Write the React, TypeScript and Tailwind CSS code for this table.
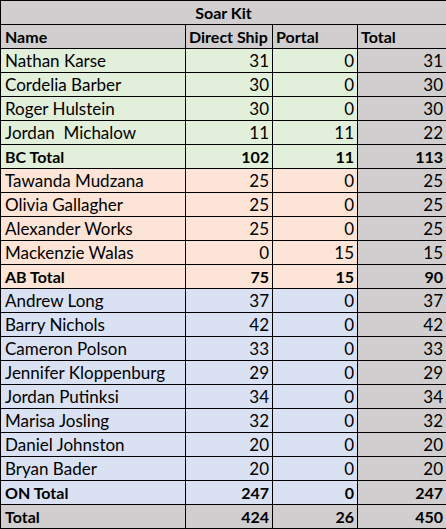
import React from 'react';

type Row = { name: string; direct: number; portal: number; total: number; bold?: boolean };

const groups: { bg: string; rows: Row[] }[] = [
  {
    bg: 'bg-[#e2efda]',
    rows: [
      { name: 'Nathan Karse', direct: 31, portal: 0, total: 31 },
      { name: 'Cordelia Barber', direct: 30, portal: 0, total: 30 },
      { name: 'Roger Hulstein', direct: 30, portal: 0, total: 30 },
      { name: 'Jordan\u00a0 Michalow', direct: 11, portal: 11, total: 22 },
      { name: 'BC Total', direct: 102, portal: 11, total: 113, bold: true },
    ],
  },
  {
    bg: 'bg-[#fce4d6]',
    rows: [
      { name: 'Tawanda Mudzana', direct: 25, portal: 0, total: 25 },
      { name: 'Olivia Gallagher', direct: 25, portal: 0, total: 25 },
      { name: 'Alexander Works', direct: 25, portal: 0, total: 25 },
      { name: 'Mackenzie Walas', direct: 0, portal: 15, total: 15 },
      { name: 'AB Total', direct: 75, portal: 15, total: 90, bold: true },
    ],
  },
  {
    bg: 'bg-[#d9e1f2]',
    rows: [
      { name: 'Andrew Long', direct: 37, portal: 0, total: 37 },
      { name: 'Barry Nichols', direct: 42, portal: 0, total: 42 },
      { name: 'Cameron Polson', direct: 33, portal: 0, total: 33 },
      { name: 'Jennifer Kloppenburg', direct: 29, portal: 0, total: 29 },
      { name: 'Jordan Putinksi', direct: 34, portal: 0, total: 34 },
      { name: 'Marisa Josling', direct: 32, portal: 0, total: 32 },
      { name: 'Daniel Johnston', direct: 20, portal: 0, total: 20 },
      { name: 'Bryan Bader', direct: 20, portal: 0, total: 20 },
      { name: 'ON Total', direct: 247, portal: 0, total: 247, bold: true },
    ],
  },
];

const cell = 'border border-black h-6 p-0 leading-none align-bottom pb-[3px]';

export default function App() {
  return (
    <div className="bg-white" style={{ fontFamily: 'Lato, "Open Sans", sans-serif' }}>
      <table className="border-collapse table-fixed w-[446px] text-[17px] text-black">
        <colgroup>
          <col className="w-[185px]" />
          <col className="w-[87px]" />
          <col className="w-[85px]" />
          <col className="w-[89px]" />
        </colgroup>
        <tbody>
          <tr className="bg-[#d0cece] font-bold text-[16px]">
            <td colSpan={4} className={`${cell} text-center`}>Soar Kit</td>
          </tr>
          <tr className="bg-[#d0cece] font-bold text-[16px]">
            <td className={`${cell} pl-1`}>Name</td>
            <td className={`${cell} pl-[3px] whitespace-nowrap`}>Direct Ship</td>
            <td className={`${cell} pl-[3px]`}>Portal</td>
            <td className={`${cell} pl-[3px]`}>Total</td>
          </tr>
          {groups.map((g) =>
            g.rows.map((r) => (
              <tr key={r.name} className={r.bold ? 'font-bold text-[16px]' : ''}>
                <td className={`${cell} ${g.bg} pl-1 whitespace-nowrap`}>{r.name}</td>
                <td className={`${cell} ${g.bg} text-right pr-[3px]`}>{r.direct}</td>
                <td className={`${cell} ${g.bg} text-right pr-[3px]`}>{r.portal}</td>
                <td className={`${cell} bg-[#d0cece] text-right pr-[3px]`}>{r.total}</td>
              </tr>
            ))
          )}
          <tr className="bg-[#d0cece] font-bold text-[16px]">
            <td className={`${cell} pl-1`}>Total</td>
            <td className={`${cell} text-right pr-[3px]`}>424</td>
            <td className={`${cell} text-right pr-[3px]`}>26</td>
            <td className={`${cell} text-right pr-[3px]`}>450</td>
          </tr>
        </tbody>
      </table>
    </div>
  );
}
